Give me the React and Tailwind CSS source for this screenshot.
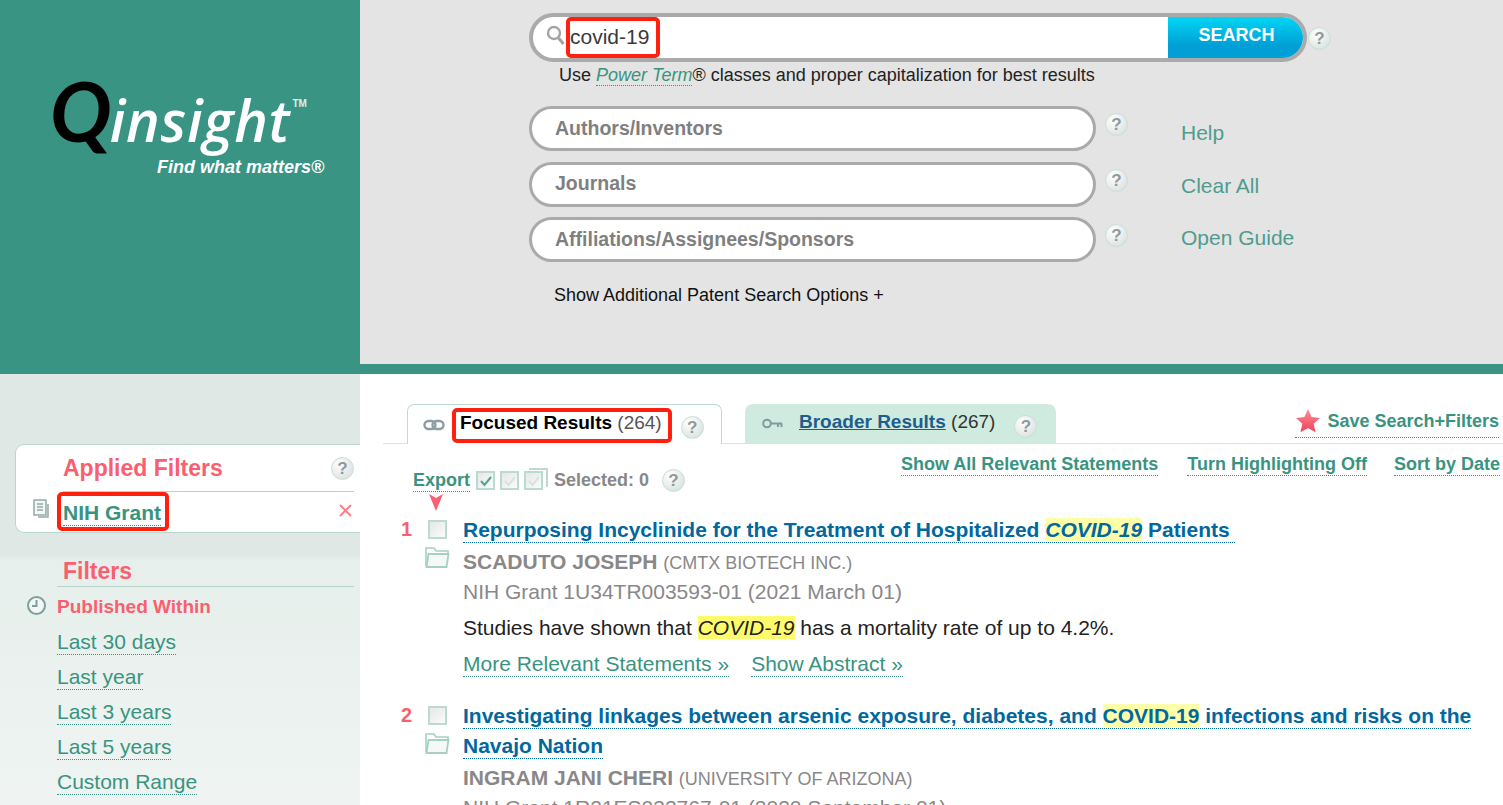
import React from "react";

const Help = ({ className = "" }) => (
  <span className={`flex h-[23px] w-[23px] shrink-0 items-center justify-center rounded-full border border-[#c9ded8] bg-[radial-gradient(circle_at_35%_30%,#ffffff,#dfe6e4_70%,#cfdad7)] text-[17px] leading-none font-bold text-[#8f9a9c] ${className}`}>?</span>
);

const Red = ({ className = "" }) => (
  <span className={`pointer-events-none absolute rounded-[5px] border-4 border-[#ff2010] ${className}`} />
);

const Checkbox = ({ check, faded, stacked }) => (
  <span className="relative flex h-[19px] w-[19px] shrink-0 items-center justify-center border-2 border-[#bcdbd0] bg-[linear-gradient(135deg,#e4e8e6,#fbfbfb)]">
    {stacked && <span className="absolute top-[-5px] left-[3px] h-[19px] w-[19px] border-2 border-b-0 border-l-0 border-[#bcdbd0]" />}
    {check && (
      <svg width="14" height="12" viewBox="0 0 14 12" fill="none">
        <path d="M2 6l3.5 4L12 2" stroke={faded ? "#d8e2de" : "#4fa593"} strokeWidth="2" />
      </svg>
    )}
  </span>
);

const Folder = () => (
  <svg width="25" height="23" viewBox="0 0 25 23" fill="none">
    <path d="M1 20V2h8l2 3h12v2" stroke="#a7d0c4" strokeWidth="1.6" />
    <path d="M1.5 21L3.5 8h20l-2 13z" fill="#f4f9f7" stroke="#a7d0c4" strokeWidth="1.8" />
  </svg>
);

const Result = ({ n, className = "", title, author, org, grant, children }) => (
  <div className={`flex ${className}`}>
    <div className="flex w-[80px] shrink-0 flex-col pt-[4px]">
      <div className="flex h-[20px] items-center">
        <span className="ml-[18px] w-[27px] text-[20px] font-bold text-[#fb5f6f]">{n}</span>
        <Checkbox />
      </div>
      <div className="mt-[7px] ml-[42px]"><Folder /></div>
    </div>
    <div className="min-w-0 flex-1">
      <div className="text-[21px] leading-[30px] font-bold text-[#00689f]">{title}</div>
      <div className="mt-[3px] text-[21px] leading-[28px] font-bold text-[#8a8788]">
        {author} <span className="text-[18px] font-normal">{org}</span>
      </div>
      <div className="text-[21px] leading-[30px] text-[#8a8788]">{grant}</div>
      {children}
    </div>
  </div>
);

const T = ({ children }) => (
  <span className="border-b-[1.5px] border-dotted border-[#00689f] pb-[1px]">{children}</span>
);

const Hl = ({ children, italic, pale }) => (
  <span className={`${pale ? "bg-[#ffffaa]" : "bg-[#fdfb6b]"} ${italic ? "italic" : ""}`}>{children}</span>
);

const DotLink = ({ children, className = "" }) => (
  <span className={`border-b-[1.5px] border-dotted border-[#39948a] text-[#39947f] ${className}`}>{children}</span>
);

export default function App() {
  return (
    <div className="relative h-[805px] w-[1503px] overflow-hidden bg-white font-['Liberation_Sans',Arial,sans-serif]">
      <header className="flex h-[374px] border-b-[10px] border-[#399483]">
        <div className="w-[360px] shrink-0 bg-[#399483] pt-[78px] pl-[50px]">
          <div className="flex h-[64px] items-baseline leading-none italic">
            <span className="font-['Lato',sans-serif] text-[82px] leading-[64px] font-bold tracking-[-3px] text-black">Q</span>
            <span className="ml-[1px] font-['Open_Sans',sans-serif] text-[57px] leading-[64px] font-semibold tracking-[0.7px] text-white">insight</span>
            <span className="relative top-[-35px] ml-[2px] text-[10px] font-bold text-[#dfeeea] not-italic">TM</span>
          </div>
          <div className="mt-[14px] ml-[107px] text-[18px] leading-[22px] font-bold text-white italic">Find what matters®</div>
        </div>
        <div className="flex-1 bg-[#e4e4e4] pt-[13px] pl-[169px]">
          <div className="flex items-center">
            <div className="relative flex h-[49px] w-[778px] items-stretch overflow-hidden rounded-full border-4 border-[#aaaaaa] bg-white">
              <svg className="mt-[7px] ml-[12px]" width="22" height="24" viewBox="0 0 22 24" fill="none">
                <circle cx="9" cy="9" r="6" stroke="#a3a3a3" strokeWidth="2.4" />
                <path d="M13.5 14l5 6" stroke="#a3a3a3" strokeWidth="3" />
              </svg>
              <span className="ml-[3px] flex-1 self-center pb-[3px] text-[21px] leading-none text-[#3a3a3a]">covid-19</span>
              <span className="flex w-[135px] items-center justify-center bg-[linear-gradient(#00d6f4,#009fd6_70%)] pb-[4px] pl-[2px] text-[18px] font-bold text-white">SEARCH</span>
            </div>
            <Help className="mt-[1px] ml-[1px]" />
          </div>
          <div className="mt-[1px] pl-[30px] text-[18px] leading-[24px] text-[#222]">
            Use <DotLink className="italic">Power Term</DotLink>® classes and proper capitalization for best results
          </div>
          <div className="mt-[19px] flex">
            <div className="flex flex-col gap-[10.5px]">
              {["Authors/Inventors", "Journals", "Affiliations/Assignees/Sponsors"].map((label) => (
                <div key={label} className="flex items-start">
                  <div className="flex h-[45px] w-[567px] items-center rounded-full border-[3px] border-[#aaaaaa] bg-white pl-[23px] text-[19.5px] font-bold text-[#7f7f7f]">{label}</div>
                  <Help className="mt-[7px] ml-[9px]" />
                </div>
              ))}
            </div>
            <div className="ml-[53px] flex flex-col pt-[15px] text-[21px] leading-[24px] text-[#4f9c8d]">
              <span>Help</span>
              <span className="mt-[29px]">Clear All</span>
              <span className="mt-[28px]">Open Guide</span>
            </div>
          </div>
          <div className="mt-[22px] pl-[25px] text-[18px] leading-[22px] text-[#111]">Show Additional Patent Search Options +</div>
        </div>
      </header>

      <div className="flex h-[431px]">
        <aside className="w-[360px] shrink-0 bg-[linear-gradient(#dfe8e4_0%,#dfe8e4_42%,#e6efeb_43%,#eff4f2_100%)] pt-[70px]">
          <div className="relative ml-[15px] h-[89px] rounded-l-[9px] border border-r-0 border-[#b9d8cd] bg-white pl-[47px]">
            <div className="mr-[6px] flex h-[47px] items-center justify-between border-b border-[#b9d2ca]">
              <span className="text-[23px] font-bold text-[#fb5f6f]">Applied Filters</span>
              <Help />
            </div>
            <div className="mt-[9px] flex items-center justify-between pr-[7px]">
              <DotLink className="text-[21px] leading-[24px] font-bold">NIH Grant</DotLink>
              <svg width="15" height="15" viewBox="0 0 15 15" className="mb-[6px]"><path d="M2 2l11 11M13 2L2 13" stroke="#fb7f8a" strokeWidth="2" /></svg>
            </div>
            <svg className="absolute top-[54px] left-[17px]" width="16" height="19" viewBox="0 0 16 19" fill="#f2f6f5" stroke="#93aaa7" strokeWidth="1.5">
              <rect x="1" y="1" width="12" height="15" />
              <path d="M4 5h6M4 8h6M4 11h6M15 5v13H5" fill="none" />
            </svg>
            <Red className="top-[47px] left-[41px] h-[39px] w-[112px]" />
          </div>

          <div className="mt-[25px] mr-[6px] ml-[57px] flex h-[29px] items-center border-b border-[#b9d2ca] pb-[2px] pl-[6px] text-[23px] font-bold text-[#fb5f6f]">Filters</div>
          <div className="relative mt-[8px] pl-[57px] text-[19px] leading-[24px] font-bold text-[#fb5f6f]">
            <svg className="absolute top-0 left-[26px]" width="21" height="21" viewBox="0 0 21 21" fill="#f2f6f5" stroke="#7f9f9d" strokeWidth="2">
              <circle cx="10.5" cy="10.5" r="8.5" />
              <path d="M10.5 5v6H6" fill="none" />
            </svg>
            Published Within
          </div>
          <div className="mt-[11px] flex flex-col items-start gap-[10px] pl-[57px] text-[21px] leading-[24px]">
            {["Last 30 days", "Last year", "Last 3 years", "Last 5 years", "Custom Range"].map((t) => (
              <DotLink key={t}>{t}</DotLink>
            ))}
          </div>
        </aside>

        <main className="relative min-w-0 flex-1 pt-[30px] pl-[23px]">
          <div className="flex h-[40px] items-stretch border-b border-[#cdeae0]">
            <div className="relative z-10 ml-[24px] flex h-[40px] w-[315px] items-center rounded-t-[7px] border border-b-0 border-[#bcdcd2] bg-white pl-[15px]">
              <svg width="22" height="12" viewBox="0 0 22 12" fill="none" stroke="#8c9ea0" strokeWidth="2.4">
                <rect x="1.5" y="2" width="11" height="8" rx="4" />
                <rect x="9.5" y="2" width="11" height="8" rx="4" />
              </svg>
              <span className="mt-[-4px] ml-[15px] text-[19px] leading-[24px] font-bold text-black">Focused Results <span className="font-normal text-[#555]">(264)</span></span>
              <Help className="mt-[6px] ml-[19px]" />
              <Red className="top-[3px] left-[44px] h-[35px] w-[220px]" />
            </div>
            <div className="ml-[23px] flex h-[39px] w-[311px] items-center rounded-t-[8px] bg-[#cfebdf] pl-[17px]">
              <svg width="21" height="11" viewBox="0 0 21 11" fill="none" stroke="#7f9a9e" strokeWidth="2">
                <circle cx="5" cy="5.5" r="3.8" />
                <path d="M9 5.5h11M16 5.5V9M19.5 5.5V9" />
              </svg>
              <span className="mt-[-4px] ml-[16px] text-[19px] leading-[24px] text-[#333]"><span className="font-bold text-[#1f5d8c] underline">Broader Results</span> (267)</span>
              <Help className="mt-[6px] ml-[19px]" />
            </div>
            <div className="mt-[-3px] mr-[4px] ml-auto flex h-[37px] items-center self-start border-b-[1.5px] border-dotted border-[#39948a] text-[18px] font-bold whitespace-nowrap text-[#39947f]">
              <svg width="26" height="26" viewBox="0 0 26 26" className="mt-[3px] mr-[6px]">
                <defs>
                  <linearGradient id="star" x1="0" y1="0" x2="0" y2="1"><stop offset="0" stopColor="#fb8f9a" /><stop offset="1" stopColor="#f43e57" /></linearGradient>
                </defs>
                <path d="M13 1l3.6 8 8.4.9-6.3 5.8 1.8 8.6L13 20l-7.5 4.3 1.8-8.6L1 9.9 9.4 9z" fill="url(#star)" />
              </svg>
              <span className="mt-[4px]">Save Search+Filters</span>
            </div>
          </div>

          <div className="flex h-[53px] items-start">
            <div className="mt-[23px] ml-[30px] flex items-center">
              <DotLink className="text-[18px] leading-[21px] font-bold">Export</DotLink>
              <span className="ml-[6px] flex items-center gap-[5px]">
                <Checkbox check />
                <Checkbox check faded />
                <Checkbox check faded stacked />
              </span>
              <span className="ml-[11px] text-[18px] font-bold whitespace-nowrap text-[#8a8788]">Selected: 0</span>
              <Help className="ml-[13px]" />
            </div>
            <div className="mt-[10px] mr-[3px] ml-auto flex gap-[29px] text-[18px] leading-[21px] font-bold whitespace-nowrap">
              <DotLink>Show All Relevant Statements</DotLink>
              <DotLink>Turn Highlighting Off</DotLink>
              <DotLink className="-ml-[2px]">Sort by Date</DotLink>
            </div>
          </div>
          <svg className="-mt-[3px] ml-[46px]" width="14" height="17" viewBox="0 0 14 17"><path d="M0 0l7 4 7-4-7 17z" fill="#fb5f70" /></svg>

          <Result
            n="1"
            className="mt-[4px]"
            title={<T>Repurposing Incyclinide for the Treatment of Hospitalized <Hl italic pale>COVID-19</Hl> Patients&nbsp;</T>}
            author="SCADUTO JOSEPH"
            org="(CMTX BIOTECH INC.)"
            grant="NIH Grant 1U34TR003593-01 (2021 March 01)"
          >
            <div className="mt-[6px] text-[21px] leading-[30px] text-[#222]">Studies have shown that <Hl italic>COVID-19</Hl> has a mortality rate of up to 4.2%.</div>
            <div className="mt-[9px] flex gap-[22px] text-[21px] leading-[24px]">
              <DotLink>More Relevant Statements »</DotLink>
              <DotLink>Show Abstract »</DotLink>
            </div>
          </Result>

          <Result
            n="2"
            className="mt-[24px]"
            title={<T>Investigating linkages between arsenic exposure, diabetes, and <Hl pale>COVID-19</Hl> infections and risks on the Navajo Nation</T>}
            author="INGRAM JANI CHERI"
            org="(UNIVERSITY OF ARIZONA)"
            grant="NIH Grant 1R21ES032767-01 (2020 September 01)"
          />
        </main>
      </div>
      <Red className="top-[17px] left-[566px] h-[41px] w-[94px]" />
    </div>
  );
}
